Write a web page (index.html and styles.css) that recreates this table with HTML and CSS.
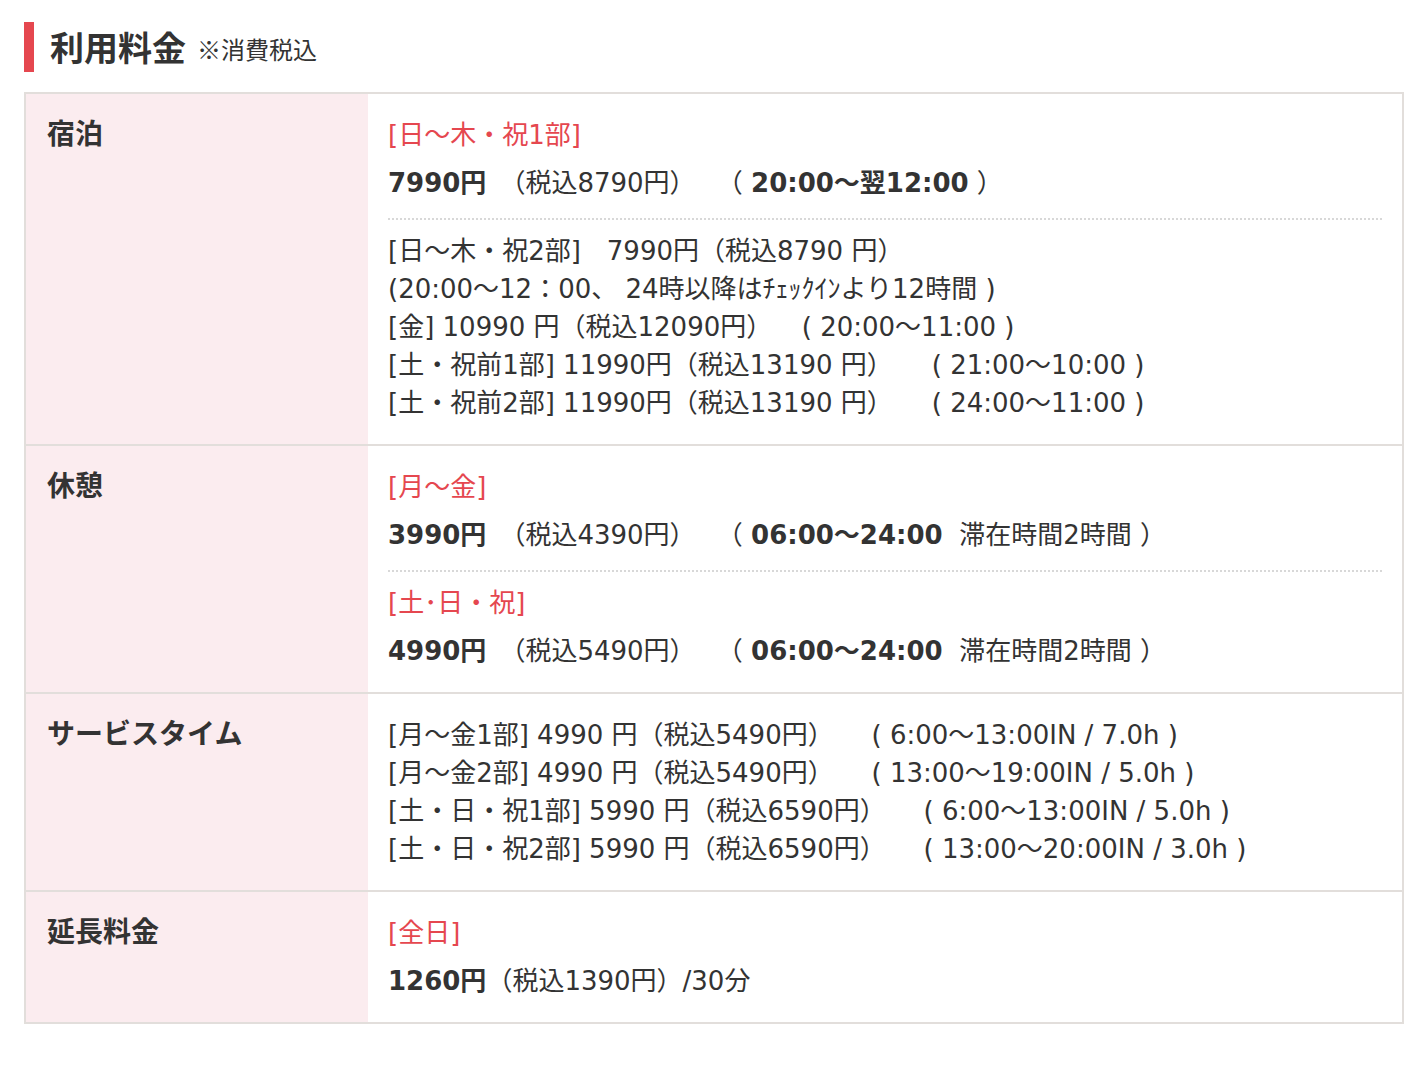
FILE: index.html
```html
<!DOCTYPE html>
<html lang="ja">
<head>
<meta charset="utf-8">
<title>利用料金</title>
<link rel="stylesheet" href="styles.css">
</head>
<body>
<section class="price">
  <h2 class="heading"><span class="heading-title">利用料金</span><span class="heading-note">※消費税込</span></h2>
  <table class="price-table">
    <tr>
      <th>宿泊</th>
      <td>
        <div class="block">
          <p class="label">[日～木・祝1部]</p>
          <p class="line"><b>7990円</b>　（税込8790円）　&nbsp;（ <b>20:00～翌12:00</b> ）</p>
        </div>
        <div class="block sep">
          <p class="line">[日～木・祝2部]　7990円（税込8790 円）</p>
          <p class="line">(20:00～12：00、 24時以降はﾁｪｯｸｲﾝより12時間 )</p>
          <p class="line">[金] 10990 円（税込12090円）　&nbsp;&nbsp;( 20:00～11:00 )</p>
          <p class="line">[土・祝前1部] 11990円（税込13190 円）　　( 21:00～10:00 )</p>
          <p class="line">[土・祝前2部] 11990円（税込13190 円）　　( 24:00～11:00 )</p>
        </div>
      </td>
    </tr>
    <tr>
      <th>休憩</th>
      <td>
        <div class="block">
          <p class="label">[月～金]</p>
          <p class="line"><b>3990円</b>　（税込4390円）　&nbsp;（ <b>06:00～24:00</b>&nbsp; 滞在時間2時間 ）</p>
        </div>
        <div class="block sep">
          <p class="label">[土･日・祝]</p>
          <p class="line"><b>4990円</b>　（税込5490円）　&nbsp;（ <b>06:00～24:00</b>&nbsp; 滞在時間2時間 ）</p>
        </div>
      </td>
    </tr>
    <tr>
      <th>サービスタイム</th>
      <td>
        <div class="block">
          <p class="line">[月～金1部] 4990 円（税込5490円）　&nbsp;&nbsp; ( 6:00～13:00IN / 7.0h )</p>
          <p class="line">[月～金2部] 4990 円（税込5490円）　&nbsp;&nbsp; ( 13:00～19:00IN / 5.0h )</p>
          <p class="line">[土・日・祝1部] 5990 円（税込6590円）　&nbsp;&nbsp; ( 6:00～13:00IN / 5.0h )</p>
          <p class="line">[土・日・祝2部] 5990 円（税込6590円）　&nbsp;&nbsp; ( 13:00～20:00IN / 3.0h )</p>
        </div>
      </td>
    </tr>
    <tr>
      <th>延長料金</th>
      <td>
        <div class="block">
          <p class="label">[全日]</p>
          <p class="line"><b>1260円</b>（税込1390円）/30分</p>
        </div>
      </td>
    </tr>
  </table>
</section>
</body>
</html>
```

FILE: styles.css
```css
* { box-sizing: border-box; }
html, body { margin: 0; padding: 0; background: #fff; }
body {
  font-family: "DejaVu Sans", "Noto Sans CJK JP", sans-serif;
  color: #333;
  padding: 22px 20px 40px 24px;
}
.heading {
  margin: 0 0 20px;
  display: flex;
  align-items: center;
  height: 50px;
  border-left: 10px solid #e5474f;
  padding-left: 16px;
  font-weight: normal;
  font-family: "Noto Sans CJK JP", sans-serif;
}
.heading-title {
  font-size: 34px;
  font-weight: 700;
  line-height: 1;
  margin-right: 11px;
}
.heading-note {
  font-size: 24px;
  line-height: 1;
  margin-top: 4px;
}
.price-table {
  width: 1380px;
  border-collapse: collapse;
  border: 2px solid #e2dedb;
}
.price-table tr { border-top: 2px solid #e2dedb; }
.price-table th {
  width: 343px;
  background: #fbecef;
  text-align: left;
  vertical-align: top;
  font-family: "Noto Sans CJK JP", sans-serif;
  font-size: 28px;
  font-weight: 700;
  line-height: 38px;
  padding: 19px 20px 24px 21px;
}
.price-table td {
  vertical-align: top;
  font-size: 26px;
  line-height: 38px;
  padding: 22px 20px 22px 20px;
}
.block p { margin: 0; white-space: nowrap; }
.label { color: #e5474f; margin-bottom: 10px !important; }
.line b { font-weight: 700; }
.sep {
  border-top: 2px dotted #d8d8d8;
  margin-top: 16px;
  padding-top: 12px;
}
```
